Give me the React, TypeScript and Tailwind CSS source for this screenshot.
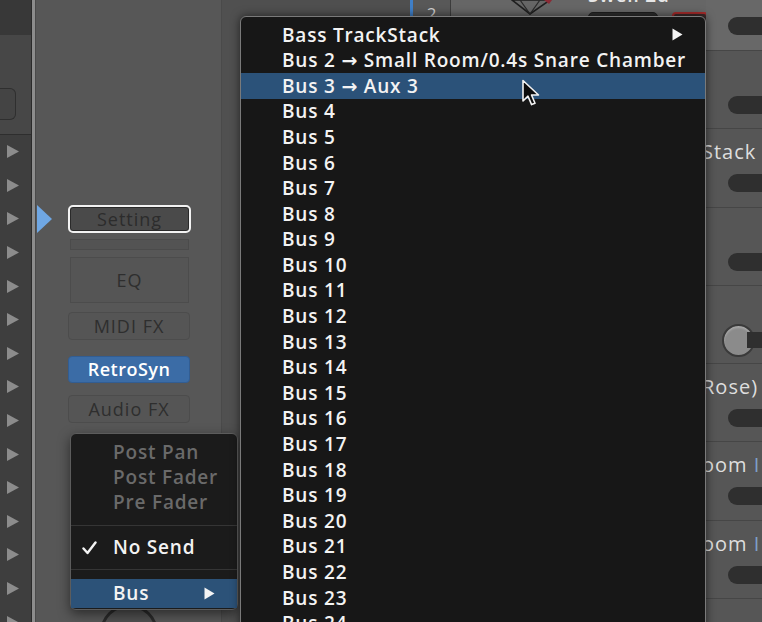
import React from "react";

const FONT = "font-['Open_Sans','DejaVu_Sans',sans-serif]";

type MenuRow = { label: string; sub?: boolean; active?: boolean };

const busRows: MenuRow[] = [
  { label: "Bass TrackStack", sub: true },
  { label: "Bus 2 → Small Room/0.4s Snare Chamber" },
  { label: "Bus 3 → Aux 3", active: true },
  ...Array.from({ length: 24 }, (_, i) => ({ label: `Bus ${i + 4}` })),
];

function SubArrow() {
  return (
    <svg width="11" height="13" viewBox="0 0 11 13" className="shrink-0">
      <path d="M0.5 0.5 L10.5 6.5 L0.5 12.5 Z" fill="#f4f4f4" />
    </svg>
  );
}

function Cursor() {
  return (
    <svg width="22" height="30" viewBox="0 0 22 30" className="absolute left-[521px] top-[79px]">
      <path
        d="M2 1.5 L2 22 L7 17.2 L10.6 25.6 L14 24.2 L10.5 16 L17.5 16 Z"
        fill="#0c0c0c"
        stroke="#f2f2f2"
        strokeWidth="1.6"
        strokeLinejoin="round"
      />
    </svg>
  );
}

function TrackList() {
  return (
    <div className="w-[31px] shrink-0 flex flex-col bg-[#3e3e3e]">
      <div className="h-[35px] shrink-0 bg-[#383838]" />
      <div className="h-[100px] shrink-0 bg-[#474747] border-b border-[#2e2e2e] flex flex-col">
        <div className="mt-[53px] w-[16px] h-[32px] shrink-0 rounded-r-[6px] border border-l-0 border-[#2f2f2f] bg-[#444]" />
      </div>
      {Array.from({ length: 15 }).map((_, i) => (
        <div key={i} className="h-[33.6px] shrink-0 flex items-center pl-[7px]">
          <svg width="12" height="13" viewBox="0 0 12 13">
            <path d="M0 0 L12 6.5 L0 13 Z" fill="#8c8c8c" />
          </svg>
        </div>
      ))}
    </div>
  );
}

function ChannelStrip() {
  const plain =
    "shrink-0 flex items-center justify-center border border-[#4c4c4c] bg-[#555] text-[18px] tracking-[1px] text-[#2e2e2e]";
  return (
    <div className="w-[186px] shrink-0 flex flex-col bg-[#575757] border-r border-[#4a4a4a]">
      <div className="mt-[205px] shrink-0 flex items-center h-[28px]">
        <svg width="16" height="28" viewBox="0 0 16 28" className="ml-[1px] shrink-0">
          <path d="M0 0 L15 14 L0 28 Z" fill="#6fa7e4" />
        </svg>
        <div className="ml-[15px] w-[123px] h-[28px] shrink-0 rounded-[5px] border-2 border-[#f2f2f2] bg-[#4a4a4a] shadow-[inset_0_0_0_1px_#2a2a2a] flex items-center justify-center text-[18px] tracking-[1px] text-[#2c2c2c]">
          Setting
        </div>
      </div>
      <div className="ml-[34px] mt-[6px] w-[119px] h-[11px] shrink-0 border border-[#4b4b4b] bg-[#535353]" />
      <div className={`ml-[34px] mt-[7px] w-[119px] h-[46px] ${plain}`}>EQ</div>
      <div className={`ml-[32px] mt-[9px] w-[122px] h-[28px] rounded-[4px] ${plain}`}>MIDI FX</div>
      <div className="ml-[32px] mt-[16px] w-[122px] h-[27px] shrink-0 rounded-[4px] border border-[#325d92] bg-[#3b6ca6] flex items-center justify-center text-[18px] font-semibold tracking-[0.5px] text-white">
        RetroSyn
      </div>
      <div className={`ml-[32px] mt-[12px] w-[122px] h-[28px] rounded-[4px] ${plain}`}>Audio FX</div>
      <div className="ml-[64px] mt-[181px] w-[58px] h-[58px] shrink-0 rounded-full border-[3px] border-[#2a2a2a] bg-[#4f4f4f]" />
    </div>
  );
}

function TopStrip() {
  return (
    <>
      <div className="w-[170px] shrink-0 bg-[#4f4f4f]" />
      <div className="w-[3px] shrink-0 bg-[#3f7fc8]" />
      <div className="w-[38px] shrink-0 bg-[#585858] border-r border-[#3c3c3c] flex justify-center">
        <span className="mt-[4px] text-[17px] leading-[20px] text-[#cfcfcf]">2</span>
      </div>
      <div className="w-[255px] shrink-0 bg-[#666] flex items-start">
        <svg width="52" height="16" viewBox="0 0 52 16" className="ml-[55px] shrink-0">
          <path d="M6 0 L44 0 L24 14 Z" fill="none" stroke="#1f1f1f" strokeWidth="1.6" />
          <path d="M14 0 L24 14 L34 0" fill="none" stroke="#2a2a2a" strokeWidth="1.2" />
          <path d="M38 0 L46 0 L43 4 Z" fill="#8b2a35" />
        </svg>
        <div className="ml-[30px] w-[72px] shrink-0 flex flex-col">
          <span className="-mt-[15px] whitespace-nowrap text-[19px] leading-[20px] font-semibold tracking-[0.8px] text-[#e6e6e6]">
            Swell 2d
          </span>
          <div className="mt-[7px] w-[70px] h-[10px] rounded-t-[5px] border border-[#1e1e1e] bg-[#2c2c2c]" />
        </div>
        <div className="ml-[12px] mt-[12px] w-[36px] h-[24px] shrink-0 rounded-[4px] border-2 border-[#a52a2a] bg-[#3a2a2a]" />
      </div>
    </>
  );
}

function RightColumn() {
  const rows: { text?: React.ReactNode; knob?: boolean }[] = [
    {},
    { text: "Stack" },
    {},
    { knob: true },
    { text: "Rose)" },
    { text: <>oom <span className="text-[#7e9fc9]">I</span></> },
    { text: <>oom <span className="text-[#7e9fc9]">I</span></> },
    {},
  ];
  return (
    <div className="w-[56px] shrink-0 flex flex-col bg-[#565656] overflow-hidden">
      <div className="h-[50px] shrink-0 bg-[#686868] flex flex-col">
        <div className="mt-[17px] ml-[22px] w-[60px] h-[18px] shrink-0 rounded-full bg-[#2f2f2f]" />
      </div>
      {rows.map((row, i) => (
        <div key={i} className="h-[78.3px] shrink-0 border-t border-[#464646] flex flex-col">
          <div className="mt-[13px] h-[20px] shrink-0 whitespace-nowrap text-[20px] leading-[20px] tracking-[1px] text-[#dedede] -ml-[4px]">
            {row.text}
          </div>
          {row.knob ? (
            <div className="mt-[5px] ml-[16px] shrink-0 flex items-center">
              <div className="w-[33px] h-[33px] shrink-0 rounded-full border-2 border-[#3a3a3a] bg-[#8b8b8b] shadow-[inset_0_2px_2px_#a8a8a8]" />
              <div className="-ml-[8px] w-[30px] h-[16px] shrink-0 rounded-r-full bg-[#2f2f2f]" />
            </div>
          ) : (
            <div className="mt-[12px] ml-[22px] w-[60px] h-[18px] shrink-0 rounded-full bg-[#2f2f2f]" />
          )}
        </div>
      ))}
    </div>
  );
}

function SendPopup() {
  const disabled = ["Post Pan", "Post Fader", "Pre Fader"];
  return (
    <div className="absolute left-[70px] top-[433px] w-[168px] h-[177px] rounded-[6px] border border-[#5c5c5c] bg-[#1b1b1b] shadow-[0_4px_12px_rgba(0,0,0,0.5)] pt-[6px] flex flex-col text-[19px] font-semibold tracking-[0.8px]">
      {disabled.map((label) => (
        <div key={label} className="h-[25px] shrink-0 flex items-center pl-[42px] text-[#6a6a6a]">
          {label}
        </div>
      ))}
      <div className="h-[20px] shrink-0 flex items-center">
        <div className="w-full h-px bg-[#353535]" />
      </div>
      <div className="h-[25px] shrink-0 flex items-center text-[#f3f3f3]">
        <svg width="15" height="14" viewBox="0 0 15 14" className="ml-[11px] shrink-0">
          <path d="M1.5 7.5 L5.5 12 L13.5 1.5" fill="none" stroke="#f3f3f3" strokeWidth="2.4" strokeLinecap="round" strokeLinejoin="round" />
        </svg>
        <span className="ml-[16px]">No Send</span>
      </div>
      <div className="h-[19px] shrink-0 flex items-center">
        <div className="w-full h-px bg-[#353535]" />
      </div>
      <div className="h-[29px] shrink-0 flex items-center pl-[42px] pr-[22px] bg-[#2c5278] text-[#f3f3f3]">
        <span>Bus</span>
        <span className="ml-auto">
          <SubArrow />
        </span>
      </div>
    </div>
  );
}

function BusMenu() {
  return (
    <div className="absolute left-[240px] top-[16px] w-[466px] h-[640px] rounded-t-[6px] border border-[#7a7a7a] bg-[#171717] shadow-[0_0_10px_rgba(0,0,0,0.6)] pt-[5px] flex flex-col text-[19px] font-semibold tracking-[0.8px] text-[#f3f3f3]">
      {busRows.map((row) => (
        <div
          key={row.label}
          className={`h-[25.6px] shrink-0 flex items-center pl-[41px] pr-[22px] whitespace-nowrap ${
            row.active ? "bg-[#2b5279]" : ""
          }`}
        >
          <span>{row.label}</span>
          {row.sub && (
            <span className="ml-auto">
              <SubArrow />
            </span>
          )}
        </div>
      ))}
    </div>
  );
}

export default function App() {
  return (
    <div className={`relative w-[762px] h-[622px] overflow-hidden bg-[#4f4f4f] ${FONT}`}>
      <div className="flex h-full">
        <TrackList />
        <div className="w-[5px] shrink-0 flex">
          <div className="w-[1px] bg-[#2a2a2a]" />
          <div className="w-[3px] bg-[#8c8c8c]" />
          <div className="w-[1px] bg-[#4a4a4a]" />
        </div>
        <ChannelStrip />
        <div className="w-[18px] shrink-0 bg-[#505050]" />
        <TopStrip />
        <RightColumn />
      </div>

      <SendPopup />
      <BusMenu />
      <Cursor />
    </div>
  );
}
